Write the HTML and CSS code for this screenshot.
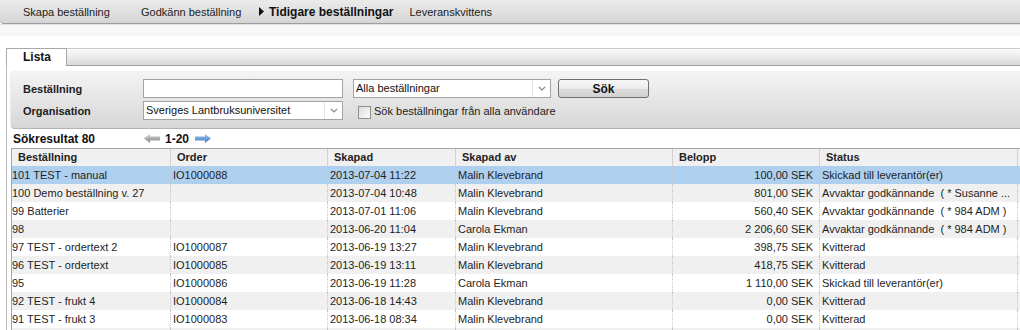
FILE: index.html
```html
<!DOCTYPE html>
<html lang="sv">
<head>
    <meta charset="UTF-8">
    <meta name="viewport" content="width=device-width, initial-scale=1.0">
    <title>Tidigare beställningar</title>
    <link rel="stylesheet" href="styles.css">
</head>
<body>
    <div class="topnav">
        <a class="nav-item">Skapa beställning</a>
        <a class="nav-item">Godkänn beställning</a>
        <a class="nav-item active">
            <svg class="caret" width="5" height="9" viewBox="0 0 5 9"><polygon points="0,0 5,4.5 0,9" fill="#111"/></svg>
            Tidigare beställningar
        </a>
        <a class="nav-item">Leveranskvittens</a>
    </div>
    <div class="subbar"></div>

    <div class="tabs">
        <div class="tab">Lista</div>
        <div class="tab-fill"></div>
    </div>

    <div class="panel">
        <div class="filter">
            <div class="filter-row">
                <label class="filter-label">Beställning</label>
                <input type="text" class="field">
                <div class="select select-type">
                    <span class="select-text">Alla beställningar</span>
                    <span class="select-arrow">
                        <svg width="8" height="5" viewBox="0 0 8 5"><path d="M1 1 L4 4 L7 1" fill="none" stroke="#8a8a8a" stroke-width="1.2"/></svg>
                    </span>
                </div>
                <button class="btn">Sök</button>
            </div>
            <div class="filter-row">
                <label class="filter-label">Organisation</label>
                <div class="select">
                    <span class="select-text">Sveriges Lantbruksuniversitet</span>
                    <span class="select-arrow">
                        <svg width="8" height="5" viewBox="0 0 8 5"><path d="M1 1 L4 4 L7 1" fill="none" stroke="#8a8a8a" stroke-width="1.2"/></svg>
                    </span>
                </div>
                <label class="check"><span class="check-box"></span>Sök beställningar från alla användare</label>
            </div>
        </div>

        <div class="result-bar">
            <span class="result-count">Sökresultat 80</span>
            <span class="pager">
                <svg width="16" height="9" viewBox="0 0 16 9">
                    <defs><linearGradient id="gray" x1="0" y1="0" x2="0" y2="1"><stop offset="0" stop-color="#cfcfcf"/><stop offset="1" stop-color="#8c8c8c"/></linearGradient></defs>
                    <polygon points="0,4.5 6,0 6,2.5 16,2.5 16,6.5 6,6.5 6,9" fill="url(#gray)"/>
                </svg>
                <span class="pager-range">1-20</span>
                <svg width="16" height="9" viewBox="0 0 16 9">
                    <defs><linearGradient id="blue" x1="0" y1="0" x2="0" y2="1"><stop offset="0" stop-color="#9cc3ec"/><stop offset="1" stop-color="#3f7cc4"/></linearGradient></defs>
                    <polygon points="16,4.5 10,0 10,2.5 0,2.5 0,6.5 10,6.5 10,9" fill="url(#blue)"/>
                </svg>
            </span>
        </div>

        <div class="orders">
            <div class="orders-row orders-head">
                <div class="cell">Beställning</div>
                <div class="cell">Order</div>
                <div class="cell">Skapad</div>
                <div class="cell">Skapad av</div>
                <div class="cell">Belopp</div>
                <div class="cell">Status</div>
                <div class="cell"></div>
            </div>
            <div class="orders-row selected">
                <div class="cell">101 TEST - manual</div>
                <div class="cell">IO1000088</div>
                <div class="cell">2013-07-04 11:22</div>
                <div class="cell">Malin Klevebrand</div>
                <div class="cell amount">100,00 SEK</div>
                <div class="cell">Skickad till leverantör(er)</div>
                <div class="cell"></div>
            </div>
            <div class="orders-row">
                <div class="cell">100 Demo beställning v. 27</div>
                <div class="cell"></div>
                <div class="cell">2013-07-04 10:48</div>
                <div class="cell">Malin Klevebrand</div>
                <div class="cell amount">801,00 SEK</div>
                <div class="cell">Avvaktar godkännande &nbsp;( * Susanne ...</div>
                <div class="cell"></div>
            </div>
            <div class="orders-row">
                <div class="cell">99 Batterier</div>
                <div class="cell"></div>
                <div class="cell">2013-07-01 11:06</div>
                <div class="cell">Malin Klevebrand</div>
                <div class="cell amount">560,40 SEK</div>
                <div class="cell">Avvaktar godkännande &nbsp;( * 984 ADM )</div>
                <div class="cell"></div>
            </div>
            <div class="orders-row">
                <div class="cell">98</div>
                <div class="cell"></div>
                <div class="cell">2013-06-20 11:04</div>
                <div class="cell">Carola Ekman</div>
                <div class="cell amount">2 206,60 SEK</div>
                <div class="cell">Avvaktar godkännande &nbsp;( * 984 ADM )</div>
                <div class="cell"></div>
            </div>
            <div class="orders-row">
                <div class="cell">97 TEST - ordertext 2</div>
                <div class="cell">IO1000087</div>
                <div class="cell">2013-06-19 13:27</div>
                <div class="cell">Malin Klevebrand</div>
                <div class="cell amount">398,75 SEK</div>
                <div class="cell">Kvitterad</div>
                <div class="cell"></div>
            </div>
            <div class="orders-row">
                <div class="cell">96 TEST - ordertext</div>
                <div class="cell">IO1000085</div>
                <div class="cell">2013-06-19 13:11</div>
                <div class="cell">Malin Klevebrand</div>
                <div class="cell amount">418,75 SEK</div>
                <div class="cell">Kvitterad</div>
                <div class="cell"></div>
            </div>
            <div class="orders-row">
                <div class="cell">95</div>
                <div class="cell">IO1000086</div>
                <div class="cell">2013-06-19 11:28</div>
                <div class="cell">Carola Ekman</div>
                <div class="cell amount">1 110,00 SEK</div>
                <div class="cell">Skickad till leverantör(er)</div>
                <div class="cell"></div>
            </div>
            <div class="orders-row">
                <div class="cell">92 TEST - frukt 4</div>
                <div class="cell">IO1000084</div>
                <div class="cell">2013-06-18 14:43</div>
                <div class="cell">Malin Klevebrand</div>
                <div class="cell amount">0,00 SEK</div>
                <div class="cell">Kvitterad</div>
                <div class="cell"></div>
            </div>
            <div class="orders-row">
                <div class="cell">91 TEST - frukt 3</div>
                <div class="cell">IO1000083</div>
                <div class="cell">2013-06-18 08:34</div>
                <div class="cell">Malin Klevebrand</div>
                <div class="cell amount">0,00 SEK</div>
                <div class="cell">Kvitterad</div>
                <div class="cell"></div>
            </div>
            <div class="orders-row">
                <div class="cell"></div>
                <div class="cell"></div>
                <div class="cell"></div>
                <div class="cell"></div>
                <div class="cell amount"></div>
                <div class="cell"></div>
                <div class="cell"></div>
            </div>
        </div>
    </div>
</body>
</html>
```

FILE: styles.css
```css
body {
    margin: 0;
    font-family: "Liberation Sans", Arial, sans-serif;
    font-size: 11px;
    color: #222;
    background: #fff;
    overflow: hidden;
}

/* Top navigation */
.topnav {
    display: flex;
    align-items: center;
    height: 23px;
    padding-left: 23px;
    background: linear-gradient(#ebebeb, #d5d5d5);
    border-bottom: 1px solid #9d9d9d;
    border-bottom-left-radius: 4px;
}

.nav-item {
    display: flex;
    align-items: center;
    box-sizing: border-box;
    min-width: 118px;
    padding-right: 16px;
    color: #222;
    white-space: nowrap;
    cursor: pointer;
}

.nav-item.active {
    font-weight: bold;
    font-size: 12px;
    color: #111;
}

.caret {
    margin-right: 5px;
}

.subbar {
    height: 11px;
    background: #f7f7f7;
    border-top: 1px solid #e2e2e2;
}

/* Tabs */
.tabs {
    display: flex;
    height: 18px;
    margin-top: 12px;
    margin-left: 6px;
}

.tab {
    box-sizing: border-box;
    width: 61px;
    height: 18px;
    padding-left: 16px;
    border: 1px solid #a9a9a9;
    border-bottom: none;
    background: #fff;
    font-size: 12px;
    font-weight: bold;
    line-height: 17px;
    color: #111;
}

.tab-fill {
    flex: 1;
    box-sizing: border-box;
    border-top: 1px solid #c9c9c9;
    border-bottom: 1px solid #9f9f9f;
    background: linear-gradient(#fcfcfc, #d9d9d9);
}

/* Panel */
.panel {
    margin-left: 6px;
    padding: 5px 0 0 4px;
    border-left: 1px solid #bdbdbd;
}

.filter {
    padding: 8px 0 8px 12px;
    background: linear-gradient(#f4f4f4, #d7d7d7);
    border-bottom: 1px solid #b4b4b4;
    border-radius: 4px 0 0 4px;
    box-shadow: -1px 0 1px rgba(0, 0, 0, 0.08);
}

.filter-row {
    display: flex;
    align-items: center;
    height: 19px;
}

.filter-row + .filter-row {
    margin-top: 3px;
}

.filter-label {
    width: 120px;
    font-weight: bold;
    color: #222;
}

.field {
    box-sizing: border-box;
    width: 200px;
    height: 19px;
    margin: 0;
    padding: 0 2px;
    border: 1px solid #a3a3a3;
    background: #fff;
    font: inherit;
}

.select {
    display: flex;
    box-sizing: border-box;
    width: 200px;
    height: 19px;
    border: 1px solid #a3a3a3;
    background: #fff;
    color: #111;
}

.select-type {
    width: 198px;
    margin-left: 10px;
}

.select-text {
    flex: 1;
    padding-left: 2px;
    line-height: 17px;
    white-space: nowrap;
    overflow: hidden;
}

.select-arrow {
    display: flex;
    align-items: center;
    justify-content: center;
    width: 17px;
    border-left: 1px solid #e4e4e4;
}

.btn {
    box-sizing: border-box;
    width: 91px;
    height: 19px;
    margin-left: 7px;
    padding: 0;
    border: 1px solid #707070;
    border-radius: 3px;
    background: linear-gradient(#f7f7f7 0%, #ebebeb 50%, #dddddd 51%, #d1d1d1 100%);
    font-family: inherit;
    font-size: 12px;
    font-weight: bold;
    color: #111;
    cursor: pointer;
}

.check {
    display: flex;
    align-items: center;
    margin-left: 15px;
    color: #222;
}

.check-box {
    box-sizing: border-box;
    width: 13px;
    height: 13px;
    margin: 3px 3px 0 0;
    border: 1px solid #8e8f8f;
    background: linear-gradient(135deg, #dcdcdc, #fbfbfb);
}

/* Result bar */
.result-bar {
    display: flex;
    align-items: center;
    height: 19px;
    padding-left: 2px;
    font-size: 12px;
    font-weight: bold;
    color: #111;
}

.result-count {
    width: 131px;
}

.pager {
    display: flex;
    align-items: center;
}

.pager-range {
    margin: 0 6px 0 5px;
}

/* Orders grid */
.orders {
    border-left: 1px solid #a4a4a4;
    overflow: hidden;
}

.orders-row {
    display: grid;
    grid-template-columns: 159px 157px 128px 217px 147px 198px 120px;
    height: 18px;
    line-height: 18px;
}

.orders-row:nth-child(odd) {
    background: #f0f0f0;
}

.orders-row.selected {
    background: #afcfef;
}

.cell {
    padding-left: 2px;
    border-right: 1px dotted #c4c4c4;
    white-space: nowrap;
    overflow: hidden;
    color: #1e1e1e;
}

.cell:first-child {
    padding-left: 0;
}

.cell.amount {
    padding: 0 6px 0 0;
    text-align: right;
}

.orders-head {
    border-top: 1px solid #a6a6a6;
    height: 17px;
    line-height: 17px;
    background: linear-gradient(#ffffff, #e6e6e6);
}

.orders-head .cell {
    padding-left: 6px;
    border-right: 1px solid #d2d2d2;
    font-weight: bold;
    color: #222;
}
```
